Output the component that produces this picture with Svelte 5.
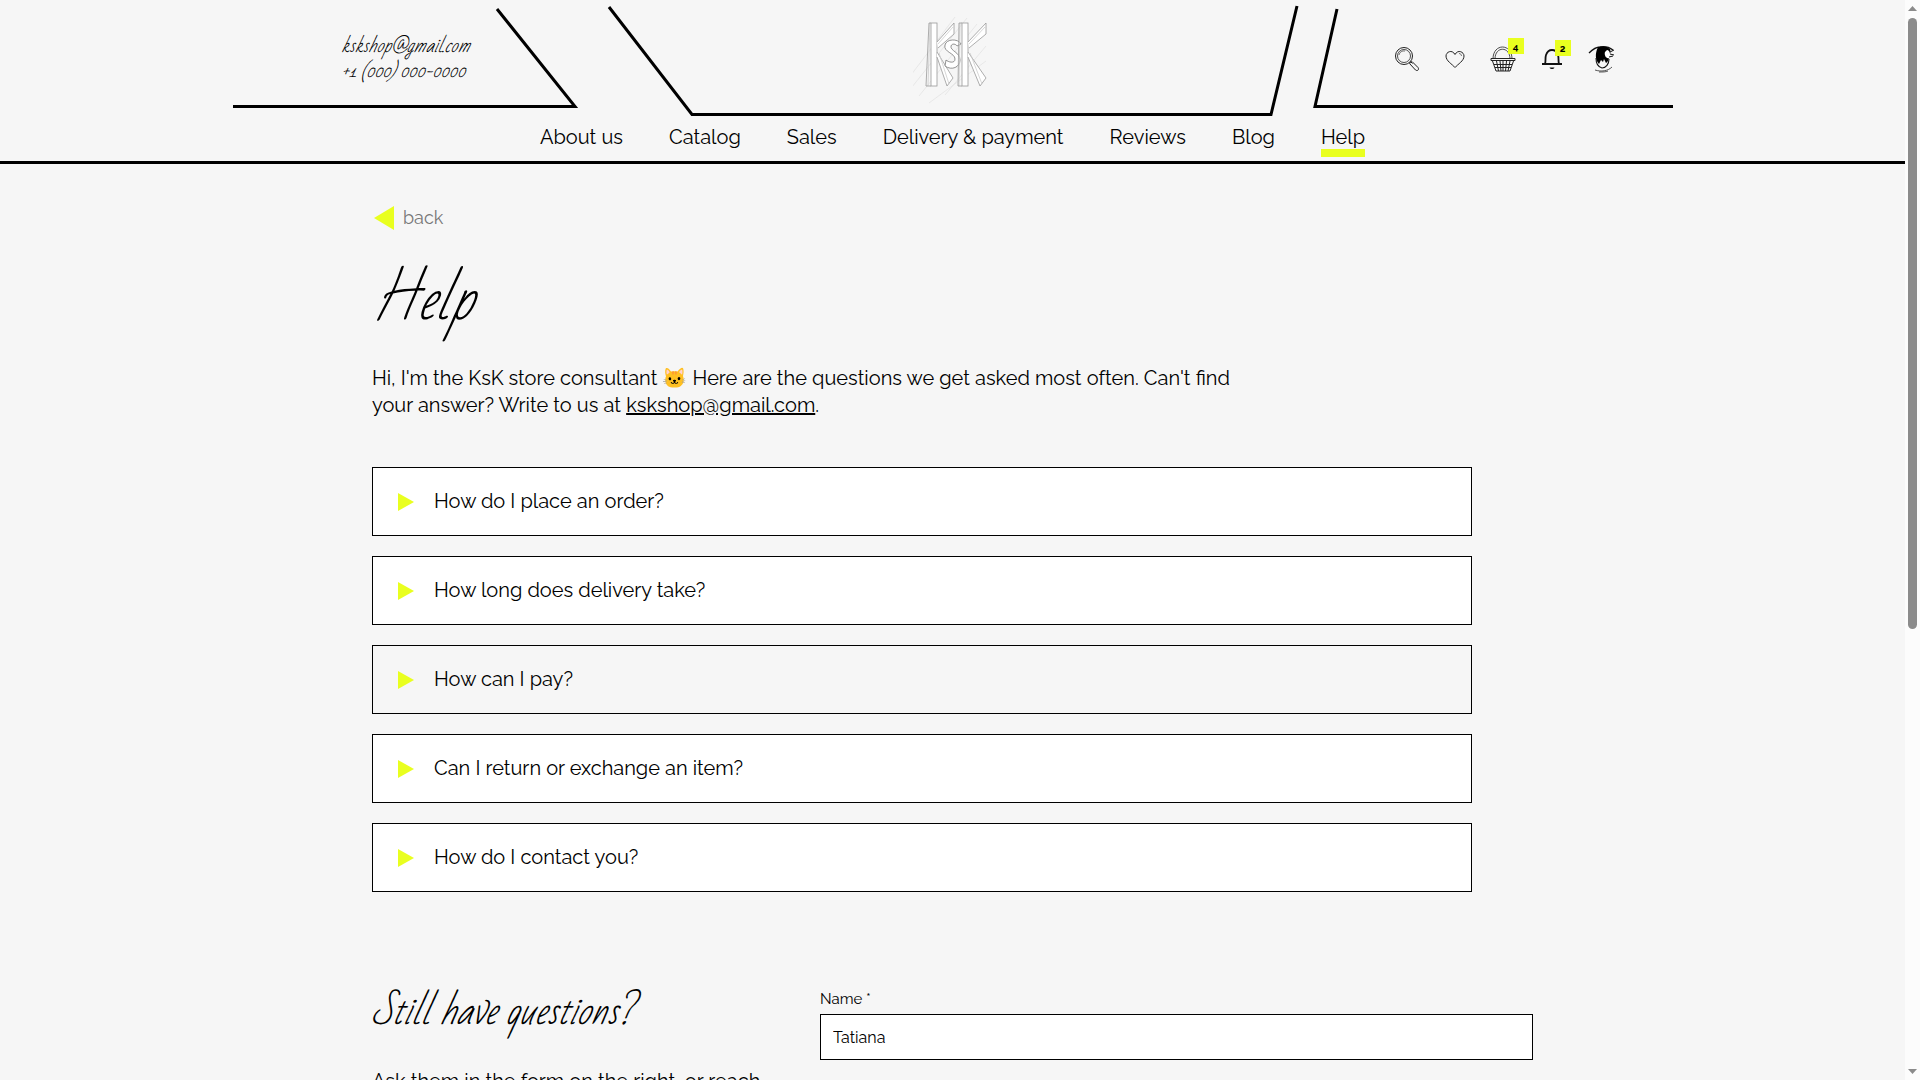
<script>
  const links = ["About us", "Catalog", "Sales", "Delivery & payment", "Reviews", "Blog", "Help"];
  const questions = [
    "How do I place an order?",
    "How long does delivery take?",
    "How can I pay?",
    "Can I return or exchange an item?",
    "How do I contact you?",
  ];

  let current = $state("Help");
  let active = $state(2);
  let name = $state("Tatiana");
</script>

<div class="window">
  <div class="page">
    <header>
      <div class="top">
        <svg class="frame" viewBox="0 0 1440 117" fill="none" stroke="#000" stroke-width="3" aria-hidden="true">
          <path d="M264 9 342 106.500H0" />
          <path d="M376 7 459 114.500H1038L1064 6" />
          <path d="M1104 9 1082 106.500H1440" />
        </svg>
        <address>
          <a href="mailto:kskshop@gmail.com">kskshop@gmail.com</a>
          <a href="tel:+10000000000">+1 (000) 000-0000</a>
        </address>
        <a class="logo" href="/" aria-label="Home">
          <svg width="80" height="90" viewBox="-2 -1 80 90" fill="#fff" stroke="#999">
            <path d="M-4 60 40 2M-3 72 52 3M4 81 62 9M14 88 71 46M30 80 71 31" stroke="#ddd" stroke-width="0.6" fill="none" />
            <!-- back stave and arms -->
            <g stroke-width="0.8">
              <rect x="16" y="8" width="6" height="63" />
              <path d="M22 27 39 8v11L23 33M22 37 38 63l-6 8L22 42" />
              <path d="M24 38l10 31M23 29 38 12" stroke="#ccc" fill="none" />
            </g>
            <path d="M46 29c-3-6-15-5-16 1-2 7 10 8 10 14 0 5-7 3-9 1l-1 6c7 5 15 1 15-6 0-8-10-9-9-14 1-3 5-2 6 0z" stroke="#777" stroke-width="0.8" />
            <g stroke-width="0.8">
              <rect x="47" y="8" width="6" height="63" />
              <path d="M53 27 71 8v11L54 33M53 37 71 63l-6 8L53 42" />
              <path d="M55 38l12 31M54 29 70 12M15 8l-2 63M45 8l-1 63" stroke="#ccc" fill="none" />
              <path d="M16 8h-2l-3 63h5M47 8h-3l-1 63h4" fill="none" />
            </g>
          </svg>
        </a>
        <div class="tools">
          <button aria-label="Search">
            <svg width="26" height="26" viewBox="0 0 26 26" fill="none" stroke="#222" stroke-width="1">
              <circle cx="10" cy="10" r="8.5" />
              <circle cx="10" cy="10" r="6.5" stroke-width="0.8" />
              <path d="M5 9a5 5 0 0 1 6-4" stroke-width="0.6" />
              <path d="m15.500 17.500 6 6.500c2 1.500 4-.5 2.500-2.500L18 15.500zM17 16l1.500 1.500" />
            </svg>
          </button>
          <button aria-label="Favourites">
            <svg width="20" height="20" viewBox="0 0 20 20" fill="none" stroke="#222" stroke-width="1">
              <path d="M10 18.500C7 15 1 12 1 7c0-4 6-7 9-1.500C13 0 19 3 19 7c0 5-6 8-9 11.500z" />
              <path d="M14 4.500c1.500 0 2.500 1 2.500 2.500" stroke-width="0.6" />
            </svg>
          </button>
          <button aria-label="Basket">
            <svg width="26" height="26" viewBox="0 0 26 26" fill="none" stroke="#222" stroke-width="1">
              <path d="M3 13C3-3 22-3 22 13M5 13C5 0 20 0 20 13" stroke-width="0.8" />
              <path d="M1 12.500h24v2H1z" />
              <path d="M2.500 15 6 25h14l3.500-10M4 18.500h18M5 21.500h16M6.500 15l2 10M10 15l1 10M13 15v10M16.500 15l-1 10M20 15l-2 10" />
            </svg>
            <span class="badge">4</span>
          </button>
          <button aria-label="Notifications">
            <svg width="22" height="22" viewBox="0 0 22 22" fill="none" stroke="#111" stroke-width="1.8">
              <path d="M1 16h20M4 16C5 13 4 10 5 7c1-3 3-5 6-5s5 2 6 5c1 3 0 6 1 9" />
              <path d="M8.500 19.500c1 2 4 2 5 0z" fill="#111" stroke="none" />
            </svg>
            <span class="badge">2</span>
          </button>
          <button aria-label="Profile">
            <svg width="28" height="28" viewBox="0 0 28 28" fill="none" stroke="#111">
              <path d="M1 8C5 4 8 2 12 2c5-1 9 0 13 3" stroke-width="1.3" />
              <path d="M10 2c5-1 9-1 12 2 1 3 0 5-1 7 0 3-1 6-3 7l-2-4-1 3-2-2-2 4c-4-4-4-11-1-17z" fill="#000" stroke="none" />
              <path d="M19 5c3 0 4 6 2 8-3 1-5-3-4-6z" fill="#fff" stroke="none" />
              <path d="M22 7l4-2M22 9l4 1M21 12l4-1" />
              <path d="M8 13c0 5 2 9 6 10 4 0 7-4 7-9" stroke-width="1.1" />
              <path d="M7 25c6 2 13 1 17-3M11 27c4 0 7 0 9-1" stroke-width="0.7" />
            </svg>
          </button>
        </div>
      </div>
      <nav>
        {#each links as link}
          <a href="#{link}" class:current={link === current} onclick={() => (current = link)}>{link}</a>
        {/each}
      </nav>
    </header>

    <main>
      <a class="back" href="/">
        <svg width="20" height="24" viewBox="0 0 20 24"><path d="M0 12 20 0v24z" fill="#e9ff1f" /></svg>
        back
      </a>
      <h1>Help</h1>
      <p class="intro">
        Hi, I'm the KsK store consultant 🐱 Here are the questions we get asked most often. Can't find
        your answer? Write to us at <a href="mailto:kskshop@gmail.com">kskshop@gmail.com</a>.
      </p>

      <div class="questions">
        {#each questions as question, i}
          <button class:active={i === active} onclick={() => (active = i)}>
            <svg width="16" height="18" viewBox="0 0 16 18"><path d="M0 0 16 9 0 18z" fill="#e9ff1f" /></svg>
            {question}
          </button>
        {/each}
      </div>

      <section class="ask">
        <div>
          <h2>Still have questions?</h2>
          <p>Ask them in the form on the right, or reach</p>
        </div>
        <form>
          <label for="name">Name *</label>
          <input id="name" type="text" bind:value={name} />
        </form>
      </section>
    </main>
  </div>

  <div class="scrollbar" aria-hidden="true">
    <svg width="9" height="5" viewBox="0 0 9 5"><path d="M0 5 4.500 0 9 5z" fill="#8b8b8b" /></svg>
    <div class="track"><div class="thumb"></div></div>
    <svg width="9" height="5" viewBox="0 0 9 5"><path d="M0 0 4.500 5 9 0z" fill="#8b8b8b" /></svg>
  </div>
</div>

<style>
  :global(body) {
    margin: 0;
    background: #f6f6f6;
  }

  .window {
    display: flex;
    height: 100vh;
    overflow: hidden;
    color: #000;
    font-family: Raleway, Lato, sans-serif;
    font-size: 20px;
    line-height: 27px;
  }

  .page {
    flex: 1;
    min-width: 0;
    overflow-y: auto;
    scrollbar-width: none;
  }

  a {
    color: inherit;
    text-decoration: none;
  }

  button {
    padding: 0;
    border: 0;
    background: none;
    color: inherit;
    font: inherit;
    cursor: pointer;
  }

  svg {
    display: block;
    flex-shrink: 0;
  }

  header {
    border-bottom: 3px solid #000;
  }

  .top {
    position: relative;
    display: grid;
    grid-template-columns: 1fr 1fr 1fr;
    align-items: center;
    max-width: 1440px;
    height: 117px;
    margin: 0 auto;
  }

  .frame {
    position: absolute;
    inset: 0;
    width: 100%;
    height: 100%;
    pointer-events: none;
  }

  address,
  h1,
  h2 {
    font-family: "Bad Script", "Marck Script", Bilbo, Caveat, "Dancing Script", cursive;
    font-style: italic;
    font-weight: 400;
  }

  address {
    display: flex;
    flex-direction: column;
    padding-left: 109px;
    font-size: 18px;
    line-height: 25px;
  }

  .logo {
    justify-self: center;
  }

  .tools {
    display: flex;
    align-items: center;
    justify-content: flex-end;
    gap: 25px;
    padding-right: 57px;
  }

  .tools button {
    position: relative;
  }

  .badge {
    position: absolute;
    top: -8px;
    right: -8px;
    width: 16px;
    height: 16px;
    background: #e9ff1f;
    font-size: 10px;
    font-weight: 700;
    line-height: 18px;
  }

  nav {
    display: flex;
    justify-content: center;
    gap: 46px;
    height: 44px;
  }

  nav a {
    height: 40px;
    padding-top: 7px;
    box-sizing: border-box;
  }

  nav a.current {
    border-bottom: 8px solid #e9ff1f;
  }

  main {
    max-width: 1161px;
    margin: 0 auto;
    padding-top: 40px;
  }

  .back {
    display: flex;
    align-items: center;
    gap: 9px;
    padding-left: 2px;
    color: #777;
    font-size: 18px;
  }

  h1,
  h2 {
    margin: 0;
  }

  h1 {
    padding: 28px 0 22px;
    font-size: 55px;
    line-height: 84px;
  }

  .intro {
    max-width: 880px;
    margin: 0 0 48px;
  }

  .intro a {
    text-decoration: underline;
  }

  .questions {
    display: flex;
    flex-direction: column;
    gap: 20px;
    max-width: 1100px;
  }

  .questions button {
    display: flex;
    align-items: center;
    gap: 20px;
    height: 69px;
    padding: 0 25px;
    border: 1px solid #000;
    background: #fff;
  }

  .questions button.active {
    background: #f6f6f6;
  }

  .ask {
    display: grid;
    grid-template-columns: 400px 1fr;
    gap: 48px;
    padding: 96px 0 80px;
  }

  h2 {
    font-size: 36px;
    line-height: 48px;
  }

  .ask p {
    margin: 32px 0 0;
  }

  form {
    display: flex;
    flex-direction: column;
  }

  label {
    font-size: 15px;
    line-height: 22px;
  }

  input {
    height: 46px;
    margin-top: 4px;
    padding: 0 12px;
    box-sizing: border-box;
    border: 1px solid #000;
    border-radius: 0;
    background: #fff;
    font: inherit;
    font-size: 16px;
  }

  .scrollbar {
    display: flex;
    flex-direction: column;
    align-items: center;
    width: 15px;
    padding: 6px 0;
    box-sizing: border-box;
    background: #fcfcfc;
  }

  .track {
    flex: 1;
    padding: 7px 0 16px;
  }

  .thumb {
    width: 9px;
    height: 59%;
    border-radius: 5px;
    background: #8b8b8b;
  }
</style>
